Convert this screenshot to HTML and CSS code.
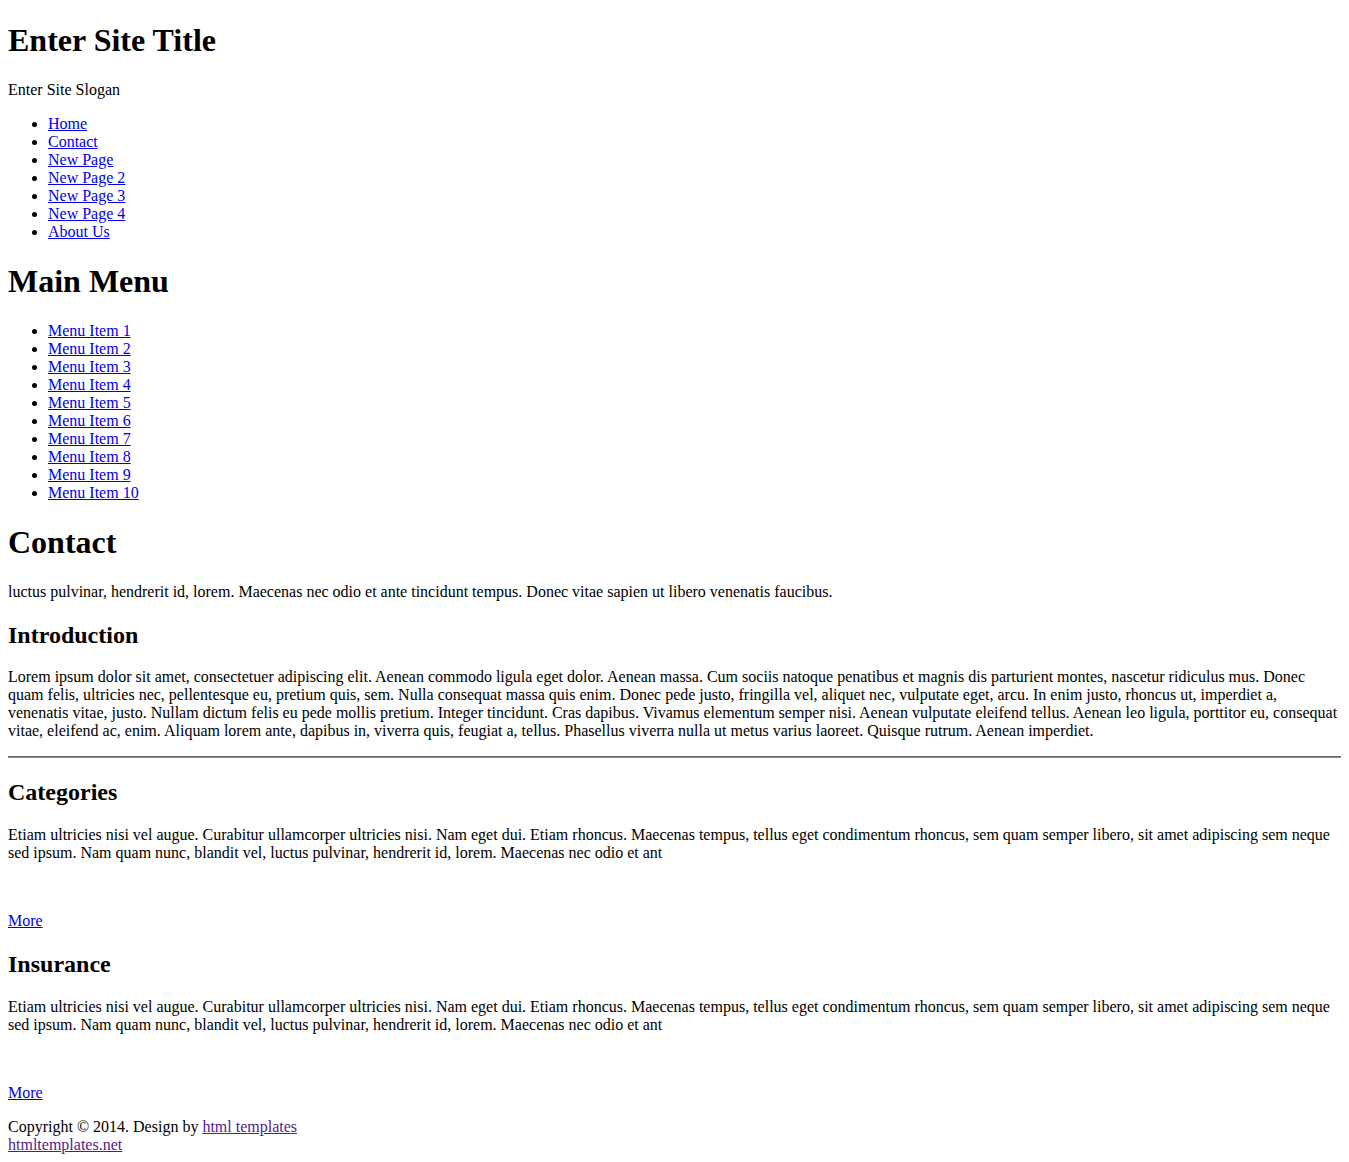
FILE: index.html
```html
<!DOCTYPE html>
<html>
<head>
<meta charset="utf-8">
<title>Enter Site Title</title>
<link rel="stylesheet" href="styles.css">
</head>
<body>
<div class="header">
<h1>Enter Site Title</h1>
<p>Enter Site Slogan</p>
<ul>
<li><a href="#">Home</a></li>
<li><a href="#">Contact</a></li>
<li><a href="#">New Page</a></li>
<li><a href="#">New Page 2</a></li>
<li><a href="#">New Page 3</a></li>
<li><a href="#">New Page 4</a></li>
<li><a href="#">About Us</a></li>
</ul>
</div>
<div class="sidebar">
<h1>Main Menu</h1>
<ul>
<li><a href="#">Menu Item 1</a></li>
<li><a href="#">Menu Item 2</a></li>
<li><a href="#">Menu Item 3</a></li>
<li><a href="#">Menu Item 4</a></li>
<li><a href="#">Menu Item 5</a></li>
<li><a href="#">Menu Item 6</a></li>
<li><a href="#">Menu Item 7</a></li>
<li><a href="#">Menu Item 8</a></li>
<li><a href="#">Menu Item 9</a></li>
<li><a href="#">Menu Item 10</a></li>
</ul>
</div>
<div class="content">
<h1>Contact</h1>
<p>luctus pulvinar, hendrerit id, lorem. Maecenas nec odio et ante tincidunt tempus. Donec vitae sapien ut libero venenatis faucibus.</p>
<h2>Introduction</h2>
<p>Lorem ipsum dolor sit amet, consectetuer adipiscing elit. Aenean commodo ligula eget dolor. Aenean massa. Cum sociis natoque penatibus et magnis dis parturient montes, nascetur ridiculus mus. Donec quam felis, ultricies nec, pellentesque eu, pretium quis, sem. Nulla consequat massa quis enim. Donec pede justo, fringilla vel, aliquet nec, vulputate eget, arcu. In enim justo, rhoncus ut, imperdiet a, venenatis vitae, justo. Nullam dictum felis eu pede mollis pretium. Integer tincidunt. Cras dapibus. Vivamus elementum semper nisi. Aenean vulputate eleifend tellus. Aenean leo ligula, porttitor eu, consequat vitae, eleifend ac, enim. Aliquam lorem ante, dapibus in, viverra quis, feugiat a, tellus. Phasellus viverra nulla ut metus varius laoreet. Quisque rutrum. Aenean imperdiet.</p>
<hr class="rule">
<h2>Categories</h2>
<p>Etiam ultricies nisi vel augue. Curabitur ullamcorper ultricies nisi. Nam eget dui. Etiam rhoncus. Maecenas tempus, tellus eget condimentum rhoncus, sem quam semper libero, sit amet adipiscing sem neque sed ipsum. Nam quam nunc, blandit vel, luctus pulvinar, hendrerit id, lorem. Maecenas nec odio et ant</p>
<p>&nbsp;</p>
<p><a href="#">More</a></p>
<h2>Insurance</h2>
<p>Etiam ultricies nisi vel augue. Curabitur ullamcorper ultricies nisi. Nam eget dui. Etiam rhoncus. Maecenas tempus, tellus eget condimentum rhoncus, sem quam semper libero, sit amet adipiscing sem neque sed ipsum. Nam quam nunc, blandit vel, luctus pulvinar, hendrerit id, lorem. Maecenas nec odio et ant</p>
<p>&nbsp;</p>
<p><a href="#">More</a></p>
</div>
<div class="footer">
<p>Copyright © 2014. Design by <a class="visited" href="#">html templates</a><br><a class="visited" href="#">htmltemplates.net</a></p>
</div>
</body>
</html>
```
FILE: styles.css
```css
body {
  margin: 0 8px 8px;
  padding: 0;
  font-family: "Liberation Serif", "Times New Roman", serif;
  font-size: 16px;
  line-height: 18px;
  color: #000;
  background: #fff;
}
h1 {
  font-size: 32px;
  line-height: 38px;
  margin: 21.44px 0;
}
h2 {
  font-size: 24px;
  line-height: 28px;
  margin: 19.92px 0;
}
p,
ul {
  margin: 16px 0;
}
.rule {
  height: 0;
  margin: 8px 0;
  border: 0;
  border-top: 1px solid #6a6a6a;
  border-bottom: 1px solid #8a8a8a;
}
a {
  color: #0000ee;
}
a.visited {
  color: #551a8b;
}
```
